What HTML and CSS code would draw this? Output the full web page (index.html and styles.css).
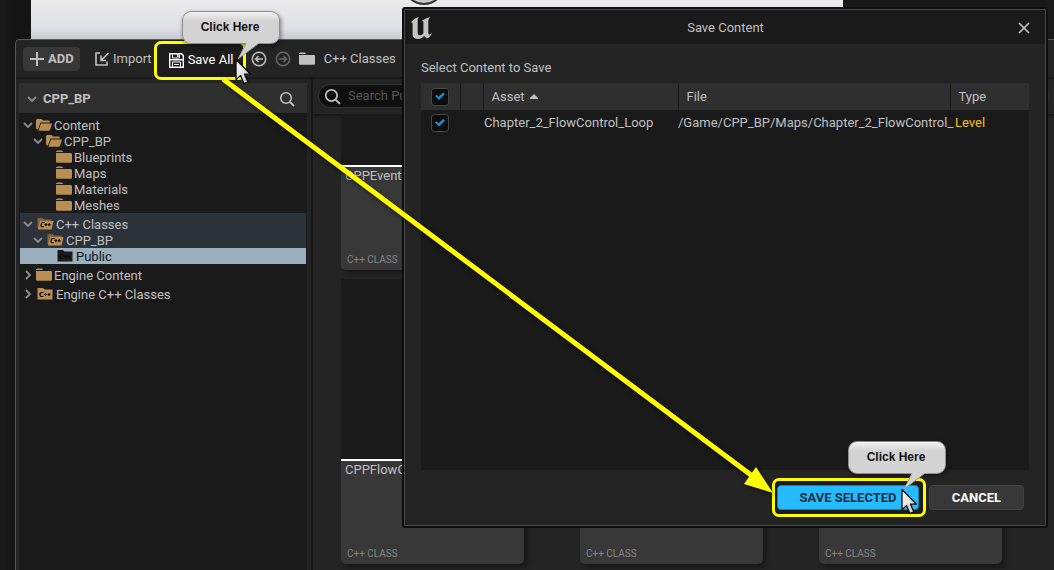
FILE: index.html
```html
<!DOCTYPE html>
<html lang="en">
<head>
<meta charset="utf-8">
<title>Content Browser – Save Content</title>
<link rel="stylesheet" href="styles.css">
</head>
<body>
<svg class="defs" aria-hidden="true">
  <defs>
    <linearGradient id="pointerFill" x1="0" y1="0" x2="1" y2="1">
      <stop offset="0" stop-color="#fff"/><stop offset="1" stop-color="#c4c4c4"/>
    </linearGradient>
    <symbol id="chev" viewBox="0 0 10 10"><path d="M1 3l4 4 4-4" fill="none" stroke="#8d8d8d" stroke-width="1.8"/></symbol>
    <symbol id="chev-right" viewBox="0 0 10 10"><path d="M3 1l4 4-4 4" fill="none" stroke="#8d8d8d" stroke-width="1.8"/></symbol>
    <symbol id="folder" viewBox="0 0 16 13"><path d="M0 1.500L1 .500h5L7.200 2H0zM0 3h15l1 .8V12l-.8.800H.8L0 12z" fill="currentColor"/></symbol>
    <symbol id="folder-open" viewBox="0 0 16 13"><path d="M0 2L1 1h4.500L7 2.500h6l.8.800V4.500H4.500L2 11.500H1.200L0 10.500z" fill="currentColor"/><path d="M5 5.500h11l-2 6.500-1 .8H2.500z" fill="currentColor"/></symbol>
    <symbol id="folder-cpp" viewBox="0 0 17 13"><path d="M1 1h5.500L8 2.500h8v10H1z" fill="currentColor"/><path d="M7 5.500H4.500l-1 1v2l1 1H7M7.500 7.500h3M9 6v3M11 7.500h3M12.500 6v3" fill="none" stroke="#0c0a07" stroke-width="1.2"/></symbol>
    <symbol id="folder-cpp-open" viewBox="0 0 17 13"><path d="M1 1h5l1.500 1.500H15V11H1z" fill="#846337"/><path d="M3.500 4H17l-2 8.500H1.500z" fill="#b98e51"/><path d="M8.300 5.500H6L4.800 6.500l-.4 2.300.9.900h2.200M8 7.700h2.800M9.600 6.200l-.4 3M11.300 7.700h2.800M12.900 6.200l-.4 3" fill="none" stroke="#18130c" stroke-width="1.2"/></symbol>
    <symbol id="search" viewBox="0 0 16 16"><circle cx="7" cy="7" r="5.300" fill="none" stroke="currentColor" stroke-width="1.600"/><path d="M11 11l4 4" stroke="currentColor" stroke-width="1.800"/></symbol>
    <symbol id="pointer" viewBox="0 0 18 28"><path d="M2 1.500v20.200l4.600-4.300 3.300 8.200 4-1.700-3.400-7.700h6z" fill="url(#pointerFill)" stroke="#0a0a0a" stroke-width="1.300" stroke-linejoin="round"/></symbol>
    <symbol id="tail" viewBox="0 0 24 18"><path d="M9 1L1 17 22 1z" fill="#d3d3d3"/><path d="M9 2L1 17 21 2" fill="none" stroke="#999"/></symbol>
  </defs>
</svg>
<div class="screen">
  <div class="viewport"><svg class="orb" viewBox="0 0 44 44"><circle cx="22" cy="22" r="20" fill="#c9c9c9" stroke="#343434" stroke-width="2"/></svg></div>

  <section class="drawer">
    <nav class="toolbar">
      <button class="tool add" type="button"><svg width="14" height="14" viewBox="0 0 14 14"><path d="M7 0v14M0 7h14" stroke="currentColor" stroke-width="2"/></svg>ADD</button>
      <button class="tool import" type="button"><svg width="14" height="14" viewBox="0 0 14 14"><path d="M5 1H1v12h11V9.500M13.500 1L6.500 8M6 3.500v5h5" fill="none" stroke="currentColor" stroke-width="1.600"/></svg>Import</button>
      <button class="tool save-all" type="button"><svg width="15" height="15" viewBox="0 0 15 15"><path d="M.7.7h11.800l1.800 1.800v11.800H.7z" fill="none" stroke="currentColor" stroke-width="1.400"/><path d="M3.500 1v4h7V1M3.500 14V9h8v5" fill="none" stroke="currentColor"/><path d="M8 1h1.500v3H8zM1 6h13v1.600H1z" fill="currentColor"/><path d="M5 11.500h5" stroke="currentColor"/></svg>Save All</button>
      <button class="tool nav" type="button" aria-label="Back"><svg width="16" height="16" viewBox="0 0 16 16"><g fill="none" stroke="currentColor" stroke-width="1.500"><circle cx="8" cy="8" r="6.700"/><path d="M12 8H5M7.500 5l-3 3 3 3"/></g></svg></button>
      <button class="tool nav dim" type="button" aria-label="Forward"><svg width="16" height="16" viewBox="0 0 16 16"><g fill="none" stroke="currentColor" stroke-width="1.500"><circle cx="8" cy="8" r="6.700"/><path d="M4 8h7M8.500 5l3 3-3 3"/></g></svg></button>
      <a class="crumb" href="#"><svg width="16" height="13"><use href="#folder"/></svg>C++ Classes</a>
    </nav>

    <div class="columns">
      <aside class="sources">
        <header class="sources-head">
          <svg width="10" height="10"><use href="#chev"/></svg><span>CPP_BP</span>
          <button class="plain" type="button" aria-label="Search folders"><svg width="16" height="16"><use href="#search"/></svg></button>
        </header>
        <ul class="tree">
          <li class="row root"><svg class="chev"><use href="#chev"/></svg><svg class="fold"><use href="#folder-open"/></svg>Content</li>
          <li class="row l1"><svg class="chev"><use href="#chev"/></svg><svg class="fold"><use href="#folder-open"/></svg>CPP_BP</li>
          <li class="row l2"><svg class="fold"><use href="#folder"/></svg>Blueprints</li>
          <li class="row l2"><svg class="fold"><use href="#folder"/></svg>Maps</li>
          <li class="row l2"><svg class="fold"><use href="#folder"/></svg>Materials</li>
          <li class="row l2"><svg class="fold"><use href="#folder"/></svg>Meshes</li>
          <li class="row root tint"><svg class="chev"><use href="#chev"/></svg><svg class="fold cpp"><use href="#folder-cpp-open"/></svg>C++ Classes</li>
          <li class="row l1 tint"><svg class="chev"><use href="#chev"/></svg><svg class="fold cpp"><use href="#folder-cpp-open"/></svg>CPP_BP</li>
          <li class="row l2 selected"><svg class="fold cpp"><use href="#folder-cpp"/></svg>Public</li>
          <li class="row root"><svg class="chev"><use href="#chev-right"/></svg><svg class="fold"><use href="#folder"/></svg>Engine Content</li>
          <li class="row root"><svg class="chev"><use href="#chev-right"/></svg><svg class="fold cpp"><use href="#folder-cpp"/></svg>Engine C++ Classes</li>
        </ul>
      </aside>

      <main class="assets">
        <div class="searchbar"><label class="search"><svg width="17" height="17"><use href="#search"/></svg><input type="text" placeholder="Search Public" aria-label="Search Public"></label></div>
        <div class="grid">
          <article class="card cut"><div class="thumb"></div><div class="info"><span>CPPEventDispatcher</span><small>C++ CLASS</small></div></article>
          <article class="card cut"><div class="thumb"></div><div class="info"></div></article>
          <article class="card cut"><div class="thumb"></div><div class="info"></div></article>
          <article class="card"><div class="thumb"></div><div class="info"><span>CPPFlowControl</span><small>C++ CLASS</small></div></article>
          <article class="card"><div class="thumb"></div><div class="info"><small>C++ CLASS</small></div></article>
          <article class="card"><div class="thumb"></div><div class="info"><small>C++ CLASS</small></div></article>
        </div>
      </main>
    </div>
  </section>

  <section class="dialog" role="dialog" aria-labelledby="dialog-title">
    <header class="titlebar">
      <svg class="logo" width="24" height="24" viewBox="0 0 24 24"><path d="M1 8.500C2.500 4.500 5.500 2 10 1c-1 1.200-1.300 2-1.300 3.200v12.300c0 2 1 2.800 2.500 2.800 1.200 0 2.300-.8 3.200-2V6.500c0-1.300-.6-1.700-1.600-1.600C15 3.600 17.500 1.700 21.500 1c-1.600 1.500-2.200 2.600-2.200 4.600v11c0 1.200.4 1.800 1.200 1.800.7 0 1.600-.6 2.700-1.900-.9 3.200-3 5-5.400 6.100l-2.700-2.600c-1.700 2-3.500 3-6 3-3.500 0-5.500-1.800-5.500-5V8c0-1-.3-1.500-.9-1.500-.6 0-1.100.7-1.700 2z" fill="#c4c4c4"/></svg>
      <h1 id="dialog-title">Save Content</h1>
      <button class="plain close" type="button" aria-label="Close"><svg width="12" height="12" viewBox="0 0 12 12"><path d="M1 1l10 10M11 1L1 11" stroke="currentColor" stroke-width="1.700"/></svg></button>
    </header>
    <div class="dialog-body">
      <p class="prompt">Select Content to Save</p>
      <div class="list">
        <table>
          <colgroup><col class="c-check"><col class="c-icon"><col class="c-asset"><col class="c-file"><col class="c-type"></colgroup>
          <thead><tr><th><input type="checkbox" checked aria-label="Select all"></th><th></th><th>Asset <svg width="8" height="6" viewBox="0 0 8 6"><path d="M4 0l4 4v1H0V4z" fill="#c0c0c0"/></svg></th><th>File</th><th>Type</th></tr></thead>
          <tbody><tr><td><input type="checkbox" checked aria-label="Select Chapter_2_FlowControl_Loop"></td><td></td><td>Chapter_2_FlowControl_Loop</td><td class="file">/Game/CPP_BP/Maps/Chapter_2_FlowControl_</td><td class="type">Level</td></tr></tbody>
        </table>
      </div>
      <footer class="actions">
        <div class="marked">
          <button class="btn primary" type="button">SAVE SELECTED</button>
          <div class="callout on-select"><span>Click Here</span><svg class="tail"><use href="#tail"/></svg><svg class="pointer"><use href="#pointer"/></svg></div>
        </div>
        <button class="btn" type="button">CANCEL</button>
      </footer>
    </div>
  </section>

  <svg class="arrow" aria-hidden="true"><path d="M223 79L755 478" stroke="#ff0" stroke-width="5"/><path d="M773 493l-29-9 12-17z" fill="#ff0"/></svg>
  <div class="callout on-save"><span>Click Here</span><svg class="tail"><use href="#tail"/></svg><svg class="pointer"><use href="#pointer"/></svg></div>
</div>
</body>
</html>
```
FILE: styles.css
```css
* { box-sizing: border-box; }

body {
  margin: 0;
  background: #151515;
  color: #c0c0c0;
  font: 13px/16px Roboto, "Liberation Sans", sans-serif;
}

button, input { font: inherit; color: inherit; }
svg { flex: none; display: block; }
.defs { position: absolute; width: 0; height: 0; }

.screen {
  position: relative;
  height: 100vh;
  overflow: hidden;
  padding: 0 211px 0 31px;
  background: linear-gradient(90deg, #191919 0 4px, #141414 15px, #191919 50%);
}

.viewport {
  height: 39px;
  background: linear-gradient(#ebebed, #dfdfe6 28px, #c8c8cf);
  overflow: hidden;
}
.orb { width: 44px; height: 44px; margin: -38px auto 0 371px; }

/* Content drawer */
.drawer {
  position: absolute;
  inset: 39px 0 0 15px;
  display: flex;
  flex-direction: column;
  border: solid #595959;
  border-width: 1px 0 0 1px;
  border-radius: 5px 0 0 0;
  background: #242424;
}

.toolbar {
  display: flex;
  align-items: center;
  height: 39px;
  padding: 0 7px;
  border-bottom: 2px solid #181818;
}
.tool {
  display: flex;
  align-items: center;
  gap: 4px;
  height: 24px;
  padding: 0;
  border: 0;
  background: none;
  white-space: nowrap;
}
.add { width: 57px; padding: 0 7px; border-radius: 4px; background: #383838; font-weight: 700; }
.import { margin-left: 15px; }
.save-all {
  height: 39px;
  width: 92px;
  margin: 3px 0 0 2px;
  padding: 0 12px;
  border: 3px solid #ff0;
  border-radius: 7px;
  background: #1c1c1c;
  color: #fff;
}
.nav { margin-left: 5px; }
.nav + .nav { margin-left: 8px; }
.dim { color: #686868; }
.crumb {
  display: flex;
  align-items: center;
  gap: 9px;
  margin-left: 8px;
  color: inherit;
  text-decoration: none;
  white-space: nowrap;
}

.columns { flex: 1; display: flex; min-height: 0; }
.sources { width: 297px; padding: 4px 0 0 3px; border-right: 2px solid #171717; flex: none; }
.sources-head {
  display: flex;
  align-items: center;
  gap: 6px;
  width: 288px;
  height: 30px;
  padding: 1px 12px 0 8px;
  background: #2f2f2f;
  font-weight: 700;
}
.plain { padding: 0; border: 0; background: none; margin-left: auto; }

.tree {
  width: 288px;
  height: 100%;
  margin: 0;
  padding: 1px 1px 0;
  background: #1a1a1a;
  list-style: none;
}
.row { display: flex; align-items: center; height: 16px; padding: 2px 0 0 3px; gap: 2px; }
.root { height: 19px; padding-top: 5px; }
.l1 { padding-left: 13px; }
.l2 { padding-left: 36px; }
.tint { background: #2b323a; }
.selected { background: #9ab1bd; color: #111; }
.chev { width: 10px; height: 10px; margin: 0 1px 2px 0; }
.fold { width: 16px; height: 13px; margin-bottom: 3px; color: #b98e51; }
.cpp { width: 18px; }
.selected .cpp { color: #1a1a1a; }

.assets { flex: 1; min-width: 0; display: flex; flex-direction: column; }
.searchbar { padding: 5px 5px 6px; box-shadow: 0 2px 3px #151515; }
.search {
  display: flex;
  align-items: center;
  gap: 7px;
  height: 24px;
  padding-left: 5px;
  border: 1px solid #363636;
  border-radius: 12px;
  background: #0f0f0f;
}
.search input { flex: 1; min-width: 0; padding: 0; border: 0; background: none; outline: 0; }
.search input::placeholder { color: #555; opacity: 1; }

.grid {
  flex: 1;
  display: grid;
  grid-template-columns: repeat(3, 183px);
  gap: 9px 56px;
  align-content: start;
  padding-left: 28px;
  overflow: hidden;
}
.card { border-radius: 0 0 5px 5px; background: #383838; box-shadow: 3px 3px 4px #171717; }
.thumb { height: 182px; background: #1a1a1a; border-bottom: 2px solid #fff; }
.cut .thumb { height: 53px; }
.info { display: flex; flex-direction: column; height: 103px; padding: 1px 4px 3px; overflow: hidden; }
.info small { margin-top: auto; padding-left: 2px; color: #868686; font: 10px/14px Roboto, sans-serif; }

/* Modal dialog */
.dialog {
  position: absolute;
  z-index: 1;
  inset: 7px 6px 42px 402px;
  display: flex;
  flex-direction: column;
  border: 2px solid #0e0e0e;
  border-radius: 3px;
  outline: 1px solid #494949;
  outline-offset: -3px;
  background: #242424;
}
.titlebar {
  display: flex;
  align-items: center;
  height: 35px;
  padding: 2px 16px 0 5px;
  background: #1a1a1a;
}
.titlebar h1 { flex: 1; margin: 0; font: inherit; text-align: center; }
.close { margin: 0; }
.dialog-body { flex: 1; display: flex; flex-direction: column; min-height: 0; padding: 16px 17px 16px; }
.prompt { margin: 0 0 7px; }

.list { flex: 1; background: #1a1a1a; }
table { width: 100%; table-layout: fixed; border-collapse: collapse; }
.c-check { width: 39px; }
.c-icon { width: 23px; }
.c-asset { width: 195px; }
.c-type { width: 79px; }
th, td { height: 27px; padding: 0 0 0 8px; font-weight: 400; text-align: left; white-space: nowrap; }
th { background: #2f2f2f; border-right: 1px solid #1a1a1a; }
th:last-child { border: 0; }
th svg { display: inline-block; margin: 0 0 1px 2px; }
td { height: 26px; padding-left: 1px; }
th:first-child, td:first-child { padding-left: 10px; }
td.file { padding-left: 0; }
td.type { padding-left: 5px; color: #f5c500; }

input[type="checkbox"] {
  display: block;
  appearance: none;
  width: 18px;
  height: 18px;
  margin: 0;
  border: 1px solid #454545;
  border-radius: 3px;
  background: #0d0d0d;
}
input[type="checkbox"]:checked::before {
  content: "";
  display: block;
  width: 10px;
  height: 8px;
  margin: 4px 3px;
  background: #1c90cc;
  clip-path: polygon(0 45%, 18% 30%, 38% 52%, 80% 0, 100% 18%, 40% 95%);
}

.actions { display: flex; justify-content: flex-end; gap: 10px; padding: 15px 5px 0 0; }
.marked { position: relative; }
.marked::before {
  content: "";
  position: absolute;
  inset: -7px -7px -7px -5px;
  border: 3px solid #ff0;
  border-radius: 7px;
  background: #1b1b1b;
}
.btn {
  position: relative;
  display: block;
  width: 95px;
  height: 25px;
  padding: 0;
  border: 1px solid #434343;
  border-radius: 4px;
  background: #383838;
  color: #fff;
  font-weight: 700;
}
.primary { width: 142px; border-color: #187fb2; background: #26bbff; color: #15303d; }

/* Tutorial annotations */
.arrow { position: absolute; z-index: 2; inset: 0; width: 100%; height: 100%; filter: drop-shadow(1px 2px 2px #0008); }
.callout {
  position: absolute;
  z-index: 3;
  width: 98px;
  height: 33px;
  border: 1px solid #8e8e8e;
  border-radius: 9px;
  background: linear-gradient(#f3f3f3, #d3d3d3 9px);
  box-shadow: 1px 2px 4px #0007;
  color: #111;
  font: 700 12px/30px "Liberation Sans", sans-serif;
  text-align: center;
}
.callout span { display: block; padding-right: 2px; }
.tail { position: absolute; left: 54px; top: 30px; width: 24px; height: 18px; }
.pointer { position: absolute; left: 51px; top: 46px; width: 18px; height: 28px; }
.on-save { left: 182px; top: 11px; }
.on-select { left: 71px; top: -44px; }
```
